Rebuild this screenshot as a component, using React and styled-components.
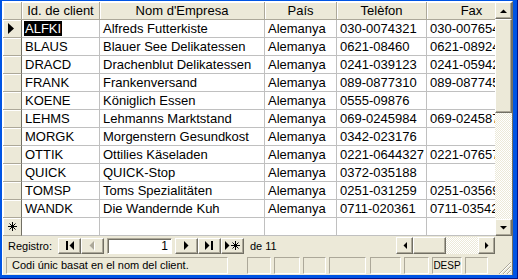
import styled, { createGlobalStyle, css } from "styled-components";

const GlobalStyle = createGlobalStyle`
  html, body { margin: 0; padding: 0; }
  body {
    width: 518px;
    height: 279px;
    overflow: hidden;
    background: #0054e3;
    font-family: "Liberation Sans", Arial, sans-serif;
  }
`;

const columns = [
  { key: "id", title: "Id. de client", width: 78 },
  { key: "nom", title: "Nom d'Empresa", width: 165 },
  { key: "pais", title: "País", width: 72 },
  { key: "tel", title: "Telèfon", width: 90 },
  { key: "fax", title: "Fax", width: 90 },
];

const clients = [
  ["ALFKI", "Alfreds Futterkiste", "Alemanya", "030-0074321", "030-0076545"],
  ["BLAUS", "Blauer See Delikatessen", "Alemanya", "0621-08460", "0621-08924"],
  ["DRACD", "Drachenblut Delikatessen", "Alemanya", "0241-039123", "0241-059428"],
  ["FRANK", "Frankenversand", "Alemanya", "089-0877310", "089-0877451"],
  ["KOENE", "Königlich Essen", "Alemanya", "0555-09876", ""],
  ["LEHMS", "Lehmanns Marktstand", "Alemanya", "069-0245984", "069-0245874"],
  ["MORGK", "Morgenstern Gesundkost", "Alemanya", "0342-023176", ""],
  ["OTTIK", "Ottilies Käseladen", "Alemanya", "0221-0644327", "0221-0765721"],
  ["QUICK", "QUICK-Stop", "Alemanya", "0372-035188", ""],
  ["TOMSP", "Toms Spezialitäten", "Alemanya", "0251-031259", "0251-035695"],
  ["WANDK", "Die Wandernde Kuh", "Alemanya", "0711-020361", "0711-035428"],
];

const statusPanels = [
  { w: 24, gap: 19 },
  { w: 26, gap: 3 },
  { w: 23, gap: 3 },
  { w: 37, gap: 3 },
  { w: 31, gap: 4 },
  { w: 25, gap: 3 },
  { w: 30, gap: 3, text: "DESP" },
  { w: 23, gap: 3 },
];

const raised = css`
  box-sizing: border-box;
  background: #ece9d8;
  border: 1px solid;
  border-color: #fff #716f64 #716f64 #fff;
  box-shadow: inset -1px -1px #aca899;
`;

const Arrow = ({ dir, color = "#000" }) => {
  const pts = {
    up: "0,4 7,4 3.5,0.5",
    down: "0,0 7,0 3.5,3.5",
    left: "4,0 4,7 0.5,3.5",
    right: "0,0 0,7 3.5,3.5",
  };
  const horiz = dir === "left" || dir === "right";
  return (
    <svg width={horiz ? 4 : 7} height={horiz ? 7 : 4}>
      <polygon points={pts[dir]} fill={color} />
    </svg>
  );
};

const NavIcon = ({ kind }) => {
  if (kind === "first")
    return (
      <svg width="9" height="9">
        <rect x="1" y="0" width="2" height="9" fill="#000" />
        <polygon points="9,0 9,9 4.5,4.5" fill="#000" />
      </svg>
    );
  if (kind === "prev")
    return (
      <svg width="7" height="10">
        <polygon points="6,1 6,10 1.5,5.5" fill="#fff" />
        <polygon points="5,0 5,9 0.5,4.5" fill="#aca899" />
      </svg>
    );
  if (kind === "next")
    return (
      <svg width="6" height="9">
        <polygon points="0,0 0,9 4.5,4.5" fill="#000" />
      </svg>
    );
  if (kind === "last")
    return (
      <svg width="9" height="9">
        <polygon points="0,0 0,9 4.5,4.5" fill="#000" />
        <rect x="6" y="0" width="2" height="9" fill="#000" />
      </svg>
    );
  return (
    <svg width="15" height="9">
      <polygon points="0,0 0,9 4.5,4.5" fill="#000" />
      <g stroke="#000" strokeWidth="1">
        <line x1="10.5" y1="0" x2="10.5" y2="9" />
        <line x1="6" y1="4.5" x2="15" y2="4.5" />
        <line x1="7.5" y1="1.5" x2="13.5" y2="7.5" />
        <line x1="13.5" y1="1.5" x2="7.5" y2="7.5" />
      </g>
    </svg>
  );
};

const Frame = styled.div`
  box-sizing: border-box;
  width: 518px;
  height: 279px;
  padding: 1px 5px 4px 2px;
  background: #0054e3;
  box-shadow: inset -1px -1px #00138c;
`;

const Window = styled.div`
  box-sizing: border-box;
  height: 100%;
  display: flex;
  flex-direction: column;
  background: #ece9d8;
  border-top: 1px solid #fff;
  border-left: 1px solid #fff;
  border-right: 1px solid #716f64;
`;

const DataArea = styled.div`
  display: flex;
  height: 234px;
  flex: none;
`;

const Viewport = styled.div`
  width: 492px;
  height: 234px;
  overflow: hidden;
  background: #fff;
`;

const Row = styled.div`
  display: flex;
  height: 18px;
  width: max-content;
`;

const HeaderCell = styled.div`
  box-sizing: border-box;
  flex: none;
  width: ${(p) => p.$w}px;
  height: 18px;
  background: #ece9d8;
  border-right: 1px solid #aca899;
  border-bottom: 1px solid #aca899;
  box-shadow: inset 1px 1px #fff;
  font-size: 13px;
  line-height: 17px;
  text-align: center;
  color: #000;
  white-space: nowrap;
`;

const Selector = styled.div`
  box-sizing: border-box;
  flex: none;
  width: 19px;
  height: 18px;
  display: flex;
  align-items: center;
  padding-left: 5px;
  background: #ece9d8;
  border-right: 1px solid #716f64;
  border-bottom: 1px solid #aca899;
  box-shadow: inset 1px 1px #fff;
`;

const Cell = styled.div`
  box-sizing: border-box;
  flex: none;
  width: ${(p) => p.$w}px;
  height: 18px;
  padding: 0 3px;
  border-right: 1px solid #c0c0c0;
  border-bottom: 1px solid #c0c0c0;
  font-size: 13px;
  line-height: 17px;
  color: #000;
  white-space: nowrap;
  overflow: hidden;
`;

const Selected = styled.span`
  display: inline-block;
  margin-left: -1px;
  padding: 0 1px;
  line-height: 15px;
  background: #000;
  color: #fff;
`;

const VScroll = styled.div`
  width: 17px;
  display: flex;
  flex-direction: column;
`;

const ScrollButton = styled.div`
  ${raised}
  flex: none;
  width: 17px;
  height: 17px;
  display: flex;
  align-items: center;
  justify-content: center;
`;

const Thumb = styled.div`
  ${raised}
  flex: none;
  width: ${(p) => p.$w || 17}px;
  height: ${(p) => p.$h || 17}px;
`;

const Track = styled.div`
  flex: 1;
  background-color: #ece9d8;
  background-image: conic-gradient(#fff 25%, #ece9d8 0 50%, #fff 0 75%, #ece9d8 0);
  background-size: 2px 2px;
`;

const NavBar = styled.div`
  display: flex;
  align-items: center;
  height: 19px;
  flex: none;
  font-size: 11px;
  color: #000;
`;

const NavLabel = styled.span`
  box-sizing: border-box;
  width: 55px;
  padding-left: 5px;
`;

const NavButton = styled.div`
  ${raised}
  width: 23px;
  height: 16px;
  display: flex;
  align-items: center;
  justify-content: center;
  margin-right: ${(p) => p.$gap || 0}px;
`;

const RecordField = styled.div`
  box-sizing: border-box;
  width: 65px;
  height: 16px;
  margin-right: 3px;
  padding-right: 3px;
  background: #fff;
  border: 1px solid;
  border-color: #aca899 #fff #fff #aca899;
  box-shadow: inset 1px 1px #716f64;
  text-align: right;
  font-size: 12px;
  line-height: 15px;
`;

const OfLabel = styled.span`
  margin-left: 6px;
`;

const HScroll = styled.div`
  margin-left: auto;
  width: 99px;
  height: 17px;
  display: flex;
`;

const Corner = styled.div`
  width: 17px;
  height: 17px;
`;

const StatusBar = styled.div`
  flex: 1;
  display: flex;
  align-items: flex-start;
  padding: 2px 0 0 3px;
  font-size: 11px;
  color: #000;
`;

const StatusPanel = styled.div`
  box-sizing: border-box;
  flex: none;
  width: ${(p) => p.$w}px;
  height: 17px;
  margin-left: ${(p) => p.$gap || 0}px;
  padding-left: ${(p) => (p.$main ? 5 : 0)}px;
  text-align: ${(p) => (p.$main ? "left" : "center")};
  font-size: ${(p) => (p.$main ? 11 : 10)}px;
  border: 1px solid;
  border-color: #aca899 #fff #fff #aca899;
  line-height: 15px;
  white-space: nowrap;
`;

const Grip = styled.div`
  margin-left: auto;
  align-self: flex-end;
  width: 14px;
  height: 14px;
`;

export default function App() {
  return (
    <>
      <GlobalStyle />
      <Frame>
        <Window>
          <DataArea>
            <Viewport>
              <Row>
                <HeaderCell $w={19} />
                {columns.map((c) => (
                  <HeaderCell key={c.key} $w={c.width}>
                    {c.title}
                  </HeaderCell>
                ))}
              </Row>
              {clients.map((r, i) => (
                <Row key={r[0]}>
                  <Selector>
                    {i === 0 && (
                      <svg width="7" height="11">
                        <polygon points="0,0 0,11 6,5.5" fill="#000" />
                      </svg>
                    )}
                  </Selector>
                  {columns.map((c, j) => (
                    <Cell key={c.key} $w={c.width}>
                      {i === 0 && j === 0 ? <Selected>{r[j]}</Selected> : r[j]}
                    </Cell>
                  ))}
                </Row>
              ))}
              <Row>
                <Selector>
                  <svg width="9" height="9">
                    <g stroke="#000" strokeWidth="1">
                      <line x1="4.5" y1="0" x2="4.5" y2="9" />
                      <line x1="0" y1="4.5" x2="9" y2="4.5" />
                      <line x1="1.5" y1="1.5" x2="7.5" y2="7.5" />
                      <line x1="7.5" y1="1.5" x2="1.5" y2="7.5" />
                    </g>
                  </svg>
                </Selector>
                {columns.map((c) => (
                  <Cell key={c.key} $w={c.width} />
                ))}
              </Row>
            </Viewport>
            <VScroll>
              <ScrollButton>
                <Arrow dir="up" />
              </ScrollButton>
              <Thumb $h={94} />
              <Track />
              <ScrollButton>
                <Arrow dir="down" />
              </ScrollButton>
            </VScroll>
          </DataArea>
          <NavBar>
            <NavLabel>Registro:</NavLabel>
            <NavButton>
              <NavIcon kind="first" />
            </NavButton>
            <NavButton $gap={3}>
              <NavIcon kind="prev" />
            </NavButton>
            <RecordField>1</RecordField>
            <NavButton>
              <NavIcon kind="next" />
            </NavButton>
            <NavButton>
              <NavIcon kind="last" />
            </NavButton>
            <NavButton>
              <NavIcon kind="new" />
            </NavButton>
            <OfLabel>de 11</OfLabel>
            <HScroll>
              <ScrollButton>
                <Arrow dir="left" />
              </ScrollButton>
              <Thumb $w={33} />
              <Track />
              <ScrollButton>
                <Arrow dir="right" />
              </ScrollButton>
            </HScroll>
            <Corner />
          </NavBar>
          <StatusBar>
            <StatusPanel $w={222} $main>
              Codi únic basat en el nom del client.
            </StatusPanel>
            {statusPanels.map((p, i) => (
              <StatusPanel key={i} $w={p.w} $gap={p.gap}>
                {p.text}
              </StatusPanel>
            ))}
            <Grip>
              <svg width="14" height="14">
                <g strokeWidth="1">
                  <line x1="13" y1="1" x2="1" y2="13" stroke="#aca899" />
                  <line x1="13" y1="2" x2="2" y2="13" stroke="#fff" />
                  <line x1="13" y1="5" x2="5" y2="13" stroke="#aca899" />
                  <line x1="13" y1="6" x2="6" y2="13" stroke="#fff" />
                  <line x1="13" y1="9" x2="9" y2="13" stroke="#aca899" />
                  <line x1="13" y1="10" x2="10" y2="13" stroke="#fff" />
                </g>
              </svg>
            </Grip>
          </StatusBar>
        </Window>
      </Frame>
    </>
  );
}
